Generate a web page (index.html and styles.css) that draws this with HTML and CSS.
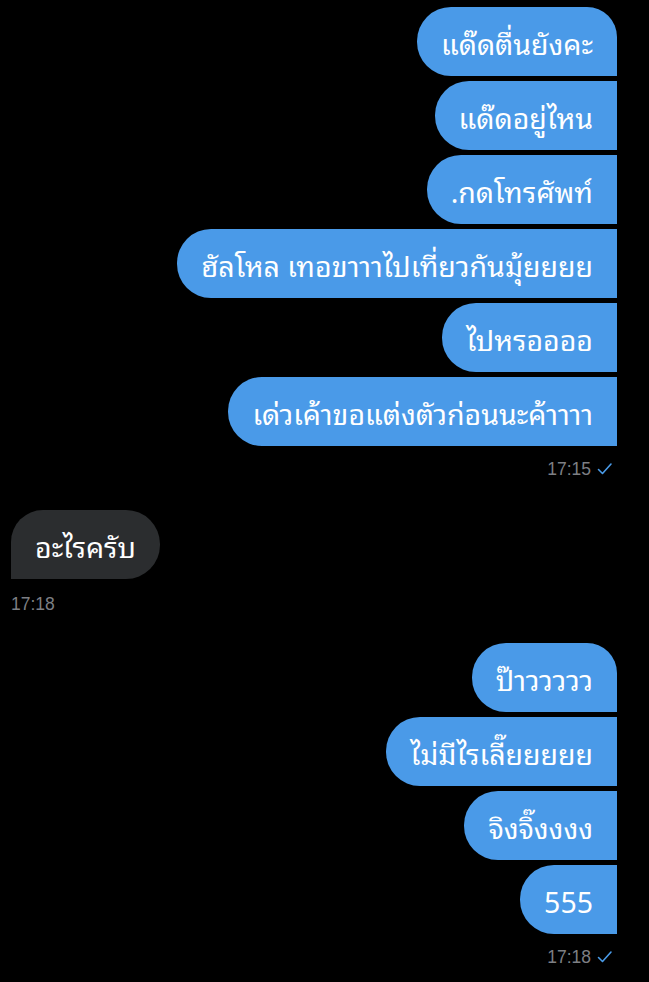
FILE: index.html
```html
<!DOCTYPE html>
<html lang="th">
<head>
<meta charset="UTF-8">
<meta name="viewport" content="width=device-width, initial-scale=1.0">
<title>แชท</title>
<link rel="stylesheet" href="styles.css">
</head>
<body>

<div class="chat">

    <div class="group out">
        <div class="bubble first">แด๊ดตื่นยังคะ</div>
        <div class="bubble">แด๊ดอยู่ไหน</div>
        <div class="bubble">.กดโทรศัพท์</div>
        <div class="bubble">ฮัลโหล เทอขาาาไปเที่ยวกันมุ้ยยยย</div>
        <div class="bubble">ไปหรออออ</div>
        <div class="bubble">เด่วเค้าขอแต่งตัวก่อนนะค้าาาา</div>
        <div class="meta">
            <span>17:15</span>
            <svg class="tick" width="16" height="14" viewBox="0 0 16 14"><path d="M1.5 7.5 L5.5 11.5 L14 2" fill="none" stroke="#4a9be8" stroke-width="1.6" stroke-linecap="round" stroke-linejoin="round"/></svg>
        </div>
    </div>

    <div class="group in">
        <div class="bubble">อะไรครับ</div>
        <div class="meta"><span>17:18</span></div>
    </div>

    <div class="group out second">
        <div class="bubble first">ป๊าววววว</div>
        <div class="bubble">ไม่มีไรเลี๊ยยยยย</div>
        <div class="bubble">จิงจิ๊งงงง</div>
        <div class="bubble">555</div>
        <div class="meta">
            <span>17:18</span>
            <svg class="tick" width="16" height="14" viewBox="0 0 16 14"><path d="M1.5 7.5 L5.5 11.5 L14 2" fill="none" stroke="#4a9be8" stroke-width="1.6" stroke-linecap="round" stroke-linejoin="round"/></svg>
        </div>
    </div>

</div>

</body>
</html>
```

FILE: styles.css
```css
/* chat screen */
body {
    margin: 0;
    padding: 0;
    background-color: #000;
    color: #fff;
    font-family: "Noto Sans Thai Looped", "Noto Sans Thai", "Noto Sans", "DejaVu Sans", sans-serif;
}

.chat {
    padding: 7px 32px 0 11px;
    display: flex;
    flex-direction: column;
}

.group {
    display: flex;
    flex-direction: column;
    gap: 5px;
}

.group.out {
    align-items: flex-end;
}

.group.in {
    align-items: flex-start;
    margin-top: 31px;
}

.group.second {
    margin-top: 29px;
}

.bubble {
    height: 69px;
    display: flex;
    align-items: center;
    padding: 0 24px;
    font-size: 28.5px;
    white-space: nowrap;
    box-sizing: border-box;
}

.out .bubble {
    background-color: #4a9ae8;
    border-radius: 34px 0 0 34px;
}

.out .bubble.first {
    border-top-right-radius: 30px;
}

.in .bubble {
    background-color: #2b2d2f;
    border-radius: 32px 34px 34px 0;
}

.meta {
    display: flex;
    align-items: center;
    gap: 6px;
    font-family: "Liberation Sans", Arial, sans-serif;
    font-size: 17.5px;
    line-height: 20px;
    color: #7d7f84;
    margin-top: 8px;
}

.out .meta {
    padding-right: 4px;
}

.in .meta {
    margin-top: 10px;
}
```
